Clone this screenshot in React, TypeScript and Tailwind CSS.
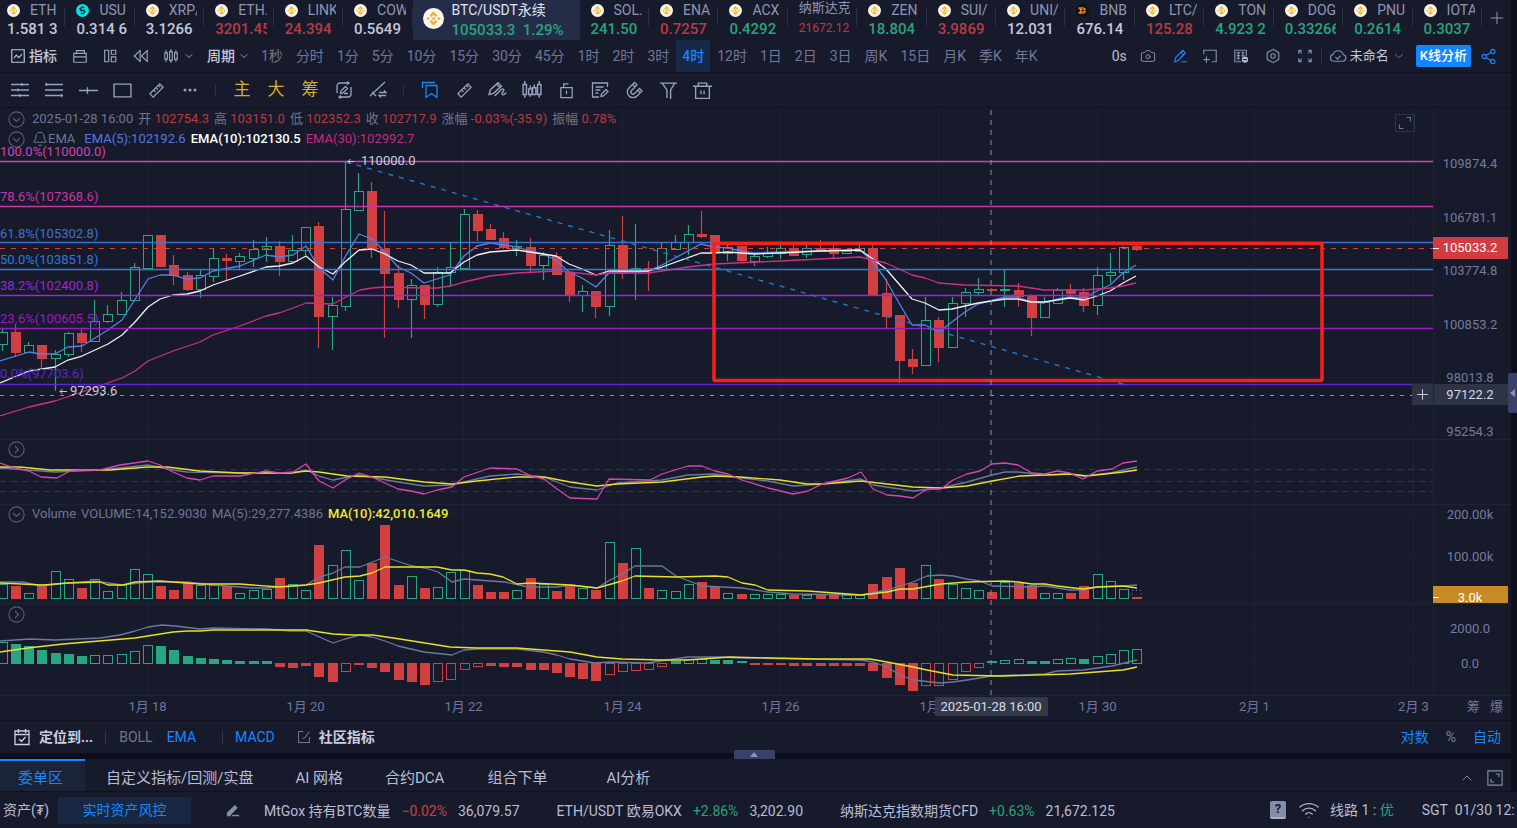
import React from 'react';
import { Camera, Share2, Wifi, Plus, ChevronDown, ChevronUp, Bell } from 'lucide-react';

const UP = '#27a67f';
const DOWN = '#d23f40';
const GREY = '#6f779b';
const YELLOW = '#e6e12a';
const FONT = 'Roboto, "Noto Sans CJK SC", sans-serif';

/* ---------- tickers ---------- */

interface Ticker {
  name: string;
  price: string;
  tone: 'flat' | 'up' | 'down';
  coin?: 'gold' | 'cyan' | 'orange';
}

const tickersLeft: Ticker[] = [
  { name: 'ETH', price: '1.581 3', tone: 'flat', coin: 'gold' },
  { name: 'USU', price: '0.314 6', tone: 'flat', coin: 'cyan' },
  { name: 'XRP/', price: '3.1266', tone: 'flat', coin: 'gold' },
  { name: 'ETH.', price: '3201.45', tone: 'down', coin: 'gold' },
  { name: 'LINK', price: '24.394', tone: 'down', coin: 'gold' },
  { name: 'COW', price: '0.5649', tone: 'flat', coin: 'gold' },
];

const tickersRight: Ticker[] = [
  { name: 'SOL.', price: '241.50', tone: 'up', coin: 'gold' },
  { name: 'ENA', price: '0.7257', tone: 'down', coin: 'gold' },
  { name: 'ACX', price: '0.4292', tone: 'up', coin: 'gold' },
  { name: '纳斯达克', price: '21672.12', tone: 'down' },
  { name: 'ZEN', price: '18.804', tone: 'up', coin: 'gold' },
  { name: 'SUI/', price: '3.9869', tone: 'down', coin: 'gold' },
  { name: 'UNI/', price: '12.031', tone: 'flat', coin: 'gold' },
  { name: 'BNB', price: '676.14', tone: 'flat', coin: 'orange' },
  { name: 'LTC/', price: '125.28', tone: 'down', coin: 'gold' },
  { name: 'TON', price: '4.923 2', tone: 'up', coin: 'gold' },
  { name: 'DOG', price: '0.33266', tone: 'up', coin: 'gold' },
  { name: 'PNU', price: '0.2614', tone: 'up', coin: 'gold' },
  { name: 'IOTA', price: '0.3037', tone: 'up', coin: 'gold' },
];

const toneClass = {
  flat: 'text-[#c3c8dc]',
  up: 'text-[#2aa37c]',
  down: 'text-[#b93a42]',
};

const Coin: React.FC<{ kind: 'gold' | 'cyan' | 'orange'; className: string }> = ({ kind, className }) => (
  <svg viewBox="0 0 20 20" className={className}>
    {kind === 'gold' && (
      <>
        <circle cx="10" cy="10" r="10" fill="#fbf7ee" />
        <path d="M10 3.6 13.4 7l-1.3 1.3L10 6.2 7.9 8.3 6.6 7zM4.9 8.7 6.2 10l-1.3 1.3L3.6 10zM15.1 8.7l1.3 1.3-1.3 1.3-1.3-1.3zM10 8.5l1.5 1.5-1.5 1.5L8.5 10zM7.9 11.7l2.1 2.1 2.1-2.1 1.3 1.3-3.4 3.4L6.6 13z" fill="#efb22f" stroke="#efb22f" strokeWidth=".7" />
      </>
    )}
    {kind === 'cyan' && (
      <>
        <circle cx="10" cy="10" r="10" fill="#12dcdc" />
        <path d="M12.8 4.8H9L6 7.6l2.2 2.2h3.4l2 2-2.8 3H7.2" fill="none" stroke="#0c2a3c" strokeWidth="2.2" />
        <path d="m11.2 7.4 1.8 1.8M7 10.8l1.8 1.8" stroke="#0c2a3c" strokeWidth="1.4" />
      </>
    )}
    {kind === 'orange' && (
      <>
        <circle cx="10" cy="10" r="10" fill="#15110d" />
        <path d="M4 5h7l4 2v2l-1.5 1L15 11v2l-4 2H4v-3h2V8H4z" fill="#f0861a" />
        <path d="M8 10h5M10.5 6v8" stroke="#15110d" strokeWidth="1.2" />
      </>
    )}
  </svg>
);

const TickerItem: React.FC<{ item: Ticker }> = ({ item }) => (
  <button className="flex-1 min-w-0 h-10 flex items-start text-left">
    <span className="flex-1 min-w-0 pl-[11px] overflow-hidden whitespace-nowrap">
      {item.coin ? (
        <>
          <span className="flex items-center h-5 text-sm leading-5 text-[#8f96b3]">
            <Coin kind={item.coin} className="w-[13px] h-[13px] shrink-0 mr-2.5" />
            {item.name}
          </span>
          <span className={`block text-[15px] leading-[19px] font-medium whitespace-pre ${toneClass[item.tone]}`}>{item.price}</span>
        </>
      ) : (
        <>
          <span className="block text-[13px] leading-4 text-[#8f96b3]">{item.name}</span>
          <span className={`block pt-1 text-xs leading-4 ${toneClass[item.tone]}`}>{item.price}</span>
        </>
      )}
    </span>
    <span className="w-px h-[18px] mt-2 ml-1.5 shrink-0 bg-[#2b3047]"></span>
  </button>
);

const TickerBar: React.FC = () => (
  <nav className="flex h-10 overflow-hidden">
    <div className="flex flex-1 min-w-0 -ml-1">
      {tickersLeft.map((item, index) => <TickerItem key={index} item={item} />)}
      <button className="w-[167px] shrink-0 h-10 pl-2.5 flex items-center bg-[#252c47] text-left whitespace-nowrap">
        <Coin kind="gold" className="w-[21px] h-[21px] mr-2 mb-1 shrink-0" />
        <span>
          <span className="block text-sm leading-5 text-[#dfe3f2]">BTC/USDT永续</span>
          <span className="block text-[15px] leading-5 font-medium text-[#2aa37c]">105033.3&nbsp; 1.29%</span>
        </span>
      </button>
      {tickersRight.map((item, index) => <TickerItem key={index} item={item} />)}
    </div>
    <button aria-label="添加" className="w-[29px] shrink-0 flex items-center justify-center text-[#8f96b3]">
      <Plus className="w-5 h-5 mb-1" strokeWidth={1.2} />
    </button>
  </nav>
);

/* ---------- toolbars ---------- */

interface GlyphProps {
  d: string;
  className?: string;
  children?: React.ReactNode;
}

const Glyph: React.FC<GlyphProps> = ({ d, className = 'w-4 h-4', children }) => (
  <svg viewBox="0 0 18 18" className={`${className} shrink-0`} fill="none" stroke="currentColor" strokeWidth="1.3">
    <path d={d} />
    {children}
  </svg>
);

const intervals = [
  '1秒', '分时', '1分', '5分', '10分', '15分', '30分', '45分', '1时', '2时', '3时', '4时',
  '12时', '1日', '2日', '3日', '周K', '15日', '月K', '季K', '年K',
];

const PeriodBar: React.FC = () => (
  <div className="flex items-center h-[33px] border-b border-[#0f111f] text-sm text-[#c3c8dc] whitespace-nowrap overflow-hidden">
    <button className="flex items-center gap-[3px] ml-2.5 font-medium">
      <Glyph d="M2 2h14v14H2zM4.5 11.5 7 8l3 3 3.500-4" />
      指标
    </button>
    <button aria-label="模板" className="ml-[15px] text-[#9aa1bd]"><Glyph d="M2 6h14v10H2zM5 6V3h9v3M2 10h14" /></button>
    <button aria-label="布局" className="ml-3.5 text-[#9aa1bd]"><Glyph d="M3 2.500h4.500v13H3zM10.500 2.500h5v4.500h-5zM10.500 10h5v5.500h-5z" /></button>
    <button aria-label="回放" className="ml-[15px] text-[#9aa1bd]"><Glyph d="M8 3v12L1.500 9zM16 3v12L9.500 9z" /></button>
    <button aria-label="图表类型" className="ml-3.5 flex items-center gap-1 text-[#9aa1bd]">
      <Glyph d="M3.500 2.500v3M3.500 12.500v3M2 5.500h3v7H2zM9 1v3M9 14v3M7.500 4h3v10h-3zM14.500 2.500v3M14.500 12.500v3M13 5.500h3v7h-3z" />
      <ChevronDown className="w-3 h-3" strokeWidth={1.8} />
    </button>
    <button className="ml-3 mr-[5px] flex items-center gap-[3px] font-medium">
      周期
      <ChevronDown className="w-3 h-3 text-[#9aa1bd]" strokeWidth={1.8} />
    </button>
    <div className="flex gap-px h-full">
      {intervals.map((label) => (
        <button
          key={label}
          className={label === '4时' ? 'px-1.5 bg-[#162a48] text-[#1787ff] font-medium' : 'px-1.5 text-[#6f779b]'}
        >
          {label}
        </button>
      ))}
    </div>
    <div className="ml-auto mr-3.5 flex items-center text-[#868dab]">
      <span className="text-[#b9bfd6] mr-[13px]">0s</span>
      <button aria-label="截图" className="mr-4"><Camera className="w-4 h-4" strokeWidth={1.5} /></button>
      <button aria-label="画线" className="mr-3.5 text-[#1787ff]"><Glyph d="M3 15.500 4 11 12 2.500l3 3L7 14zM10.500 15.500H17M10 5l3 3" /></button>
      <button aria-label="添加窗口" className="mr-[15px]"><Glyph d="M2 7V2.500h14v13h-5M5 9.500v7M1.500 13h7" /></button>
      <button aria-label="公告" className="mr-4">
        <Glyph d="M9.500 15.500H2v-13h13V9M4 5.500h4M4 8.500h4M4 11.500h4M6 4v10M9.500 5.500H13M9.500 8.500h3.500M11 4v6">
          <circle cx="13.500" cy="13" r="3.500" fill="#b9bfd6" stroke="none" />
          <path d="M11.500 13h4" stroke="#171a2b" />
        </Glyph>
      </button>
      <button aria-label="设置" className="mr-4"><Glyph d="m9 1.500 6.500 3.750v7.500L9 16.500l-6.500-3.750v-7.500z"><circle cx="9" cy="9" r="2.500" /></Glyph></button>
      <button aria-label="全屏" className="mr-2"><Glyph d="M2 6.500V2.500h4M12 2.500h4v4M16 11.500v4h-4M6 15.500H2v-4M2.500 3l3 3M15.500 3l-3 3M15.500 15l-3-3M2.500 15l3-3" /></button>
      <span className="w-px h-4 bg-[#2b3047] mr-[7px]"></span>
      <button className="flex items-center text-[13px] text-[#c3c8dc] mr-2.5">
        <svg viewBox="0 0 20 16" className="w-[18px] h-3.5 mr-[3px] text-[#868dab]" fill="none" stroke="currentColor" strokeWidth="1.3">
          <path d="M5 14a4 4 0 0 1-.5-7.900A6 6 0 0 1 16 6.500 3.800 3.800 0 0 1 15.500 14zM7 9l2.500 2.500L13 7.500" />
        </svg>
        未命名
        <ChevronDown className="w-3.5 h-3.5 ml-[3px] text-[#868dab]" strokeWidth={1.4} />
      </button>
      <button className="h-[22px] px-1 rounded-xs bg-[#1285ff] text-white text-[13px] font-medium mr-[9px]">K线分析</button>
      <button aria-label="分享" className="text-[#1787ff]"><Share2 className="w-[17px] h-[17px]" strokeWidth={1.6} /></button>
    </div>
  </div>
);

const ToolButton: React.FC<{ label: string; children: React.ReactNode; className?: string }> = ({ label, children, className = '' }) => (
  <button aria-label={label} className={`w-[34px] h-full flex items-center justify-center shrink-0 ${className}`}>
    {children}
  </button>
);

const RULER = 'm2 12.500 10.500-10.500 3.500 3.500L5.500 16zM6 8.500 8 10.500M8.500 6l2 2M11 3.500l2 2';

const DrawBar: React.FC = () => (
  <div className="flex items-center h-[35px] pl-[3px] border-b border-[#0f111f] text-[#9aa1bd]">
    <ToolButton label="平行线"><Glyph className="w-[18px] h-[18px]" d="M0 3.500h18M0 9h18M0 14.500h18M11 2v3M7 7.500v3M9 13v3" /></ToolButton>
    <ToolButton label="斐波那契"><Glyph className="w-[18px] h-[18px]" d="M0 3.500h18M0 9h18M0 14.500h18M1.500 2v3M16.500 13v3" /></ToolButton>
    <ToolButton label="水平线"><Glyph className="w-[19px] h-[19px]" d="M0 9h18M8 6v6" /></ToolButton>
    <ToolButton label="矩形"><Glyph className="w-[19px] h-[19px]" d="M1 3h16v12H1z" /></ToolButton>
    <ToolButton label="测量"><Glyph className="w-[17px] h-[17px]" d={RULER} /></ToolButton>
    <ToolButton label="更多">
      <svg viewBox="0 0 14 4" className="w-3.5 h-1" fill="currentColor">
        <circle cx="2" cy="2" r="1.500" /><circle cx="7" cy="2" r="1.500" /><circle cx="12" cy="2" r="1.500" />
      </svg>
    </ToolButton>
    <span className="w-px h-3 ml-2 mr-[9px] bg-[#2b3047]"></span>
    <button className="w-[34px] text-[17px] text-[#d9ac30]">主</button>
    <button className="w-[34px] text-[17px] text-[#d9ac30]">大</button>
    <button className="w-[34px] text-[17px] text-[#d9ac30]">筹</button>
    <ToolButton label="连续绘制"><Glyph className="w-[18px] h-[18px]" d="M14 2H5a3 3 0 0 0-3 3v7M4 16h9a3 3 0 0 0 3-3V6M12 .5 14 2l-2 1.500M6 14.500 4 16l2 1.500M5.500 12.500l.5-2.500 4.500-4.500 2 2L8 12zM9 12.500h4" /></ToolButton>
    <ToolButton label="趋势"><Glyph className="w-[18px] h-[18px]" d="M1 15 16 1M3 11l4 4M10 11.500h7l-2-2M17 14.500h-7l2 2" /></ToolButton>
    <span className="w-px h-3 ml-2 mr-[9px] bg-[#2b3047]"></span>
    <ToolButton label="收藏" className="text-[#1787ff]"><Glyph className="w-[18px] h-[18px]" d="M1.500 7V1.500H14M5 4.500h11v12l-5.500-4-5.500 4z" /></ToolButton>
    <ToolButton label="尺子"><Glyph className="w-[17px] h-[17px]" d={RULER} /></ToolButton>
    <ToolButton label="画笔"><Glyph className="w-5 h-5" d="m1 13 1-4 7-6.500 3 3L5 12zM8 4l3 3M6 14.500l6-6c2-1.500 3 .500 1.500 2s-1 3.500 1 2.500l2-1.500" /></ToolButton>
    <ToolButton label="形态"><Glyph className="w-5 h-5" d="M2.500 1v3M2.500 13v3M1 4h3v9H1zM7.500 5v3M6 8h3v5H6zM7.500 13v2M11 4v3M9.500 7h3v6h-3zM15.500 1v3M15.500 13v3M14 4h3v9h-3z" /></ToolButton>
    <ToolButton label="锁定"><Glyph className="w-[17px] h-[17px]" d="M3 6h12v10.500H3zM6 6V2h5M9 9v4" /></ToolButton>
    <ToolButton label="笔记"><Glyph className="w-[18px] h-[18px]" d="M16.500 6V2h-15v14H8M4.500 6h8M4.500 9h5M4.500 12h3M10 15.500l.5-2.500L15 8.500l2 2-4.500 4.500z" /></ToolButton>
    <ToolButton label="磁吸"><Glyph className="w-[18px] h-[18px]" d="M9.500 1.500 4 7a5.600 5.600 0 0 0 8 8l5-5-2.500-2.500-5 5a2 2 0 0 1-3-3L12 4zM7.500 3.500 10 6M13 9.500l2 2" /></ToolButton>
    <ToolButton label="筛选"><Glyph className="w-[19px] h-[19px]" d="M1 2h16M3 2l4.500 6.500V16M15 2l-4 6.500V17" /></ToolButton>
    <ToolButton label="删除"><Glyph className="w-[19px] h-[19px]" d="M0 5h18M5 5V2h8v3M2.500 5v11.500h13V5M7.500 9v3.500M10.500 9v3.500" /></ToolButton>
  </div>
);

/* ---------- chart ---------- */

const TOP = 108;
const CHART_HEIGHT = 612;
const STEP = 13.19;
const barX = (i: number) => Math.floor(2.4 + STEP * i) + 0.5;

// direction (1 up, 0 down), high, body top, body bottom, low
const candles = [
  [1, 329, 332, 344, 351], [0, 324, 332, 352, 357], [1, 342, 345, 352, 353], [0, 345, 345, 358, 368],
  [1, 350, 354, 358, 391], [1, 332, 333, 354, 357], [0, 329, 333, 342, 352], [1, 300, 321, 341, 341],
  [1, 305, 314, 321, 323], [1, 292, 300, 314, 314], [1, 263, 267, 300, 300], [1, 235, 235, 268, 268],
  [0, 235, 235, 266, 266], [0, 255, 265, 275, 285], [0, 272, 275, 289, 291], [1, 269, 275, 289, 298],
  [1, 248, 258, 276, 282], [0, 254, 258, 260, 281], [1, 253, 256, 261, 270], [1, 240, 249, 258, 267],
  [1, 237, 246, 249, 262], [0, 241, 246, 261, 276], [1, 235, 250, 261, 261], [1, 227, 227, 250, 255],
  [0, 222, 226, 316, 348], [1, 297, 305, 316, 350], [1, 162, 209, 306, 311], [1, 173, 191, 210, 210],
  [0, 182, 191, 249, 258], [0, 211, 249, 273, 338], [0, 265, 273, 299, 308], [1, 279, 285, 299, 338],
  [0, 285, 285, 304, 319], [1, 267, 272, 304, 307], [1, 243, 267, 272, 287], [1, 209, 214, 268, 268],
  [0, 210, 214, 230, 241], [0, 224, 229, 239, 240], [0, 232, 238, 247, 249], [1, 240, 246, 248, 256],
  [0, 238, 247, 265, 273], [1, 252, 255, 265, 280], [0, 252, 256, 274, 274], [0, 272, 272, 295, 302],
  [1, 285, 291, 295, 312], [0, 291, 291, 306, 318], [1, 230, 245, 306, 316], [0, 216, 245, 273, 279],
  [1, 224, 268, 272, 300], [0, 261, 268, 269, 291], [1, 243, 248, 269, 270], [1, 235, 242, 249, 250],
  [1, 225, 234, 242, 255], [0, 211, 234, 236, 238], [0, 235, 235, 251, 251], [1, 245, 247, 253, 261],
  [0, 246, 246, 260, 262], [1, 254, 256, 261, 266], [1, 247, 252, 256, 258], [1, 245, 248, 253, 259],
  [0, 245, 248, 255, 255], [1, 245, 248, 254, 258], [0, 240, 248, 251, 251], [0, 244, 248, 253, 259],
  [1, 249, 251, 253, 254], [1, 244, 248, 251, 251], [0, 245, 248, 294, 294], [0, 279, 293, 316, 328],
  [0, 315, 315, 360, 383], [0, 349, 359, 366, 374], [1, 297, 320, 365, 365], [0, 317, 320, 347, 362],
  [1, 297, 303, 347, 348], [1, 288, 292, 303, 317], [1, 278, 289, 292, 295], [0, 288, 289, 290, 290],
  [1, 270, 289, 290, 307], [0, 283, 290, 296, 307], [0, 294, 296, 317, 336], [1, 297, 302, 317, 317],
  [1, 288, 290, 303, 304], [0, 284, 289, 293, 295], [0, 288, 292, 305, 312], [1, 267, 275, 305, 315],
  [1, 253, 272, 275, 283], [1, 246, 247, 272, 280], [0, 243, 246, 249, 251],
];

const volumes = [
  15, 13, 6, 14, 28, 20, 11, 20, 8, 14, 30, 25, 13, 9, 16, 14, 14, 13, 6, 9, 10, 21, 15, 9, 54, 34, 49, 19, 36, 74,
  14, 23, 11, 12, 27, 29, 14, 7, 7, 9, 21, 15, 8, 14, 11, 9, 57, 36, 51, 11, 9, 8, 15, 17, 12, 6, 5, 5, 5, 5,
  4, 4, 4, 4, 4, 4, 15, 22, 31, 16, 34, 20, 15, 11, 9, 7, 17, 16, 14, 6, 6, 6, 13, 25, 18, 10, 2,
];

// histogram height, 1 when the bar is hollow
const macd = [
  [21, 1], [19, 0], [17, 0], [13, 0], [10, 0], [9, 0], [7, 0], [8, 1], [8, 1], [9, 1], [12, 1], [18, 1],
  [17, 0], [13, 0], [7, 0], [5, 0], [4, 0], [3, 0], [2, 0], [2, 0], [2, 0], [-3, 0], [-4, 0], [-2, 0],
  [-13, 0], [-18, 0], [-8, 1], [-1, 0], [-4, 0], [-8, 0], [-16, 0], [-18, 0], [-21, 0], [-18, 1], [-16, 1], [-6, 1],
  [-3, 1], [-2, 0], [-3, 0], [-3, 0], [-6, 0], [-6, 0], [-9, 0], [-13, 0], [-15, 0], [-17, 0], [-11, 1], [-8, 1],
  [-7, 1], [-6, 1], [-3, 1], [2, 0], [4, 1], [4, 1], [3, 0], [3, 0], [1, 0], [-1, 0], [-1, 0], [-1, 0],
  [-2, 0], [-2, 0], [-2, 0], [-2, 0], [-2, 0], [-2, 0], [-7, 0], [-14, 0], [-21, 0], [-27, 0], [-22, 1], [-22, 1],
  [-16, 1], [-8, 1], [-4, 1], [1, 0], [3, 1], [4, 1], [2, 0], [2, 0], [4, 1], [5, 1], [4, 0], [7, 1],
  [9, 1], [13, 1], [14, 1],
];

const lines = [
  {
    color: '#5b7fe0',
    points: '0,361 29,352 40,354 55,354 68,347 82,346 108,330 122,320 148,279 160,275 173,275 187,279 200,278 213,271 240,266 266,255 279,257 293,255 306,246 319,268 333,280 345,257 359,234 372,239 385,252 398,267 411,273 424,283 450,275 464,256 477,246 490,243 517,247 530,251 543,254 556,260 569,272 582,278 596,287 609,273 622,272 635,272 648,271 662,265 675,258 701,244 714,247 728,248 741,251 754,253 780,252 820,251 860,250 873,262 886,280 899,303 912,325 925,325 939,332 952,322 965,312 978,304 1005,297 1018,297 1031,302 1044,303 1057,299 1070,297 1084,298 1097,291 1110,285 1123,273 1136,265',
  },
  {
    color: '#eef0f6',
    points: '0,383 29,371 55,367 68,360 82,356 108,344 122,335 135,322 148,307 160,299 173,295 187,294 200,291 213,285 240,276 266,267 279,266 293,263 306,256 319,267 333,274 345,262 359,250 372,249 385,254 398,261 411,265 424,273 450,273 464,262 477,255 490,252 517,250 530,252 543,254 556,256 569,264 582,269 596,275 609,271 648,271 662,267 701,253 714,253 728,252 754,254 780,253 820,251 860,250 873,259 886,269 899,284 912,299 925,303 939,310 952,309 978,303 1005,299 1018,299 1031,302 1044,302 1057,300 1070,298 1084,300 1097,296 1110,291 1123,283 1136,276',
  },
  {
    color: '#cf2e86',
    points: '0,416 29,407 55,401 82,392 122,378 135,371 148,361 173,351 200,342 213,335 240,326 266,316 279,313 293,308 306,303 333,304 346,297 360,290 372,288 385,287 424,288 437,288 450,286 464,282 490,276 517,273 556,271 569,272 596,275 609,273 648,273 675,269 688,267 714,264 780,261 820,259 860,257 886,263 899,269 912,275 925,278 939,283 965,285 1018,286 1031,288 1044,290 1084,290 1110,288 1123,286 1136,283',
  },
  {
    color: GREY,
    points: '0,468 55,472 100,470 148,465 173,470 187,472 240,473 293,473 306,470 319,476 333,480 359,475 398,482 424,486 452,485 464,482 490,476 517,474 544,477 570,487 597,490 617,483 662,480 688,475 715,474 742,478 768,481 793,486 822,484 861,479 873,485 913,491 941,488 967,482 992,475 1005,472 1018,472 1045,475 1070,474 1083,476 1110,473 1137,467',
  },
  {
    color: YELLOW,
    points: '0,467 20,467 50,470 110,470 148,467 167,467 200,471 240,473 290,473 306,471 319,472 333,474 347,476 385,477 424,482 452,484 477,481 517,477 544,477 570,482 597,486 617,484 662,482 702,477 715,476 740,477 780,480 807,484 822,484 861,481 887,484 913,487 941,488 967,486 992,481 1020,476 1045,475 1070,474 1087,476 1123,472 1137,470',
  },
  {
    color: '#d545b3',
    points: '0,463 15,468 29,471 41,477 57,478 70,471 82,470 100,470 120,465 148,461 160,465 173,472 187,478 200,480 213,476 240,476 266,471 279,473 293,472 306,464 319,481 333,488 345,480 359,473 372,477 398,489 411,491 424,494 437,490 452,487 464,477 490,468 517,469 531,476 544,479 557,489 570,498 597,499 609,479 650,480 662,474 688,466 702,466 715,471 728,474 742,480 768,488 793,494 808,491 822,484 848,478 861,472 873,489 887,495 900,496 913,498 927,489 941,489 953,480 967,474 980,471 992,464 1005,463 1018,465 1032,473 1045,474 1057,471 1070,473 1083,479 1097,471 1112,469 1123,463 1137,461',
  },
  {
    color: GREY,
    points: '0,582 23,582 40,586 68,583 95,581 122,585 148,582 187,582 213,585 253,588 266,588 279,587 306,585 319,577 333,573 345,567 360,567 385,557 412,566 425,568 438,572 452,582 464,579 477,580 505,582 528,587 557,587 570,585 597,588 610,580 622,574 635,566 662,566 676,576 702,586 742,588 768,592 793,594 861,595 887,590 913,582 927,576 941,575 953,576 967,579 980,581 992,586 1030,587 1045,586 1070,590 1083,590 1097,587 1123,586 1137,585',
  },
  {
    color: YELLOW,
    points: '0,583 43,585 68,583 100,582 108,585 123,585 135,582 160,581 200,584 240,584 279,587 306,585 319,583 345,577 360,576 372,573 385,567 437,567 452,570 464,570 477,573 490,574 503,577 517,584 531,583 570,585 597,588 622,581 635,576 676,577 715,576 728,577 742,583 755,585 768,590 808,591 848,594 861,595 887,592 900,589 913,589 941,584 967,582 1005,581 1018,582 1032,584 1045,584 1057,586 1083,589 1097,587 1123,586 1137,588',
  },
  {
    color: GREY,
    points: '0,641 30,639 55,640 100,638 120,635 135,631 148,627 162,625 175,626 200,629 213,628 267,629 290,631 306,631 333,643 345,639 360,635 372,637 385,641 398,646 424,652 452,655 464,650 477,649 517,649 543,652 557,655 570,659 595,663 610,662 647,663 688,657 720,657 740,658 861,660 873,662 887,667 900,675 913,680 940,683 953,682 967,680 992,676 1045,674 1057,671 1083,670 1112,666 1137,660',
  },
  {
    color: YELLOW,
    points: '0,652 28,648 63,644 135,638 173,632 187,631 200,631 213,630 306,630 333,634 353,635 373,635 400,639 450,647 477,648 517,648 570,652 597,657 622,659 662,660 687,660 730,657 817,659 870,659 887,662 913,667 927,670 953,675 1000,676 1070,674 1123,670 1137,667',
  },
];

const fibs = [
  { y: 161.5, label: '100.0%(110000.0)', labelY: 156, color: '#d044b4' },
  { y: 206.5, label: '78.6%(107368.6)', labelY: 201, color: '#c836a8' },
  { y: 242.5, label: '61.8%(105302.8)', labelY: 238, color: '#3d73d2' },
  { y: 269.5, label: '50.0%(103851.8)', labelY: 264, color: '#2f78dc' },
  { y: 295.5, label: '38.2%(102400.8)', labelY: 290, color: '#9e26dc' },
  { y: 328.5, label: '23.6%(100605.5)', labelY: 323, color: '#9a1bc6' },
  { y: 384.5, label: '0.0%(97703.6)', labelY: 378, color: '#5f24dc' },
];

const dates = [
  { x: 147.5, label: '1月 18' },
  { x: 305.5, label: '1月 20' },
  { x: 463.5, label: '1月 22' },
  { x: 622.5, label: '1月 24' },
  { x: 780.5, label: '1月 26' },
  { x: 938.5, label: '1月 28' },
  { x: 1097.5, label: '1月 30' },
  { x: 1254.5, label: '2月 1' },
  { x: 1413.5, label: '2月 3' },
];

const axisTicks = [
  { y: 163, label: '109874.4' },
  { y: 217, label: '106781.1' },
  { y: 270, label: '103774.8' },
  { y: 324, label: '100853.2' },
  { y: 377, label: '98013.8' },
  { y: 431, label: '95254.3' },
  { y: 514, label: '200.00k' },
  { y: 556, label: '100.00k' },
  { y: 628, label: '2000.0' },
  { y: 663, label: '0.0' },
];

const paneBorders = [439.5, 504.5, 603.5, 695.5];

interface BarProps {
  x: number;
  y: number;
  height: number;
  color: string;
  hollow: boolean;
}

const Bar: React.FC<BarProps> = ({ x, y, height, color, hollow }) =>
  hollow && height > 2 ? (
    <rect x={x - 4} y={y + 0.5} width={9} height={height - 1} fill="none" stroke={color} />
  ) : (
    <rect x={x - 4.5} y={y} width={10} height={Math.max(height, 2)} fill={color} />
  );

const Candle: React.FC<{ data: number[]; index: number }> = ({ data, index }) => {
  const [up, high, top, bottom, low] = data;
  const x = barX(index);
  const color = up ? UP : DOWN;
  return (
    <g>
      <path d={`M${x} ${high}V${top}M${x} ${bottom}V${low}`} stroke={color} strokeWidth="1.2" />
      <Bar x={x} y={top} height={bottom - top + 1} color={color} hollow={up === 1} />
    </g>
  );
};

const Plot: React.FC = () => (
  <svg className="block w-full" height={CHART_HEIGHT} fontFamily={FONT} fontSize="13">
    <g transform={`translate(0 ${-TOP})`}>
      {dates.map((d) => <path key={d.x} d={`M${d.x} 108V696`} stroke="#1d2135" />)}
      {axisTicks.map((t) => <line key={t.y} x1="0" x2="100%" y1={t.y + 0.5} y2={t.y + 0.5} stroke="#1b1f32" />)}
      {paneBorders.map((y) => <line key={y} x1="0" x2="100%" y1={y} y2={y} stroke="#1f2338" />)}
      {[469.5, 481.5, 491.5].map((y) => (
        <line key={y} x1="0" x2="100%" y1={y} y2={y} stroke="#31364d" strokeDasharray="6 5" />
      ))}

      {candles.map((c, i) => <Candle key={i} data={c} index={i} />)}
      {volumes.map((v, i) => (
        <Bar key={i} x={barX(i)} y={599 - v} height={v} color={candles[i][0] ? UP : DOWN} hollow={candles[i][0] === 1} />
      ))}
      <rect x={1132} y={590.5} width={9} height={7} fill="none" stroke={GREY} strokeDasharray="1 3" />
      {macd.map(([value, hollow], i) => (
        <Bar
          key={i}
          x={barX(i)}
          y={value > 0 ? 663 - Math.max(value, 2) : 663}
          height={Math.abs(value) + 1}
          color={value > 0 ? UP : DOWN}
          hollow={hollow === 1}
        />
      ))}
      {lines.map((l, i) => (
        <polyline key={i} points={l.points} fill="none" stroke={l.color} strokeWidth="1.3" strokeLinejoin="round" />
      ))}

      {fibs.map((f) => (
        <g key={f.y}>
          <line x1="0" x2="100%" y1={f.y} y2={f.y} stroke={f.color} strokeWidth="1.4" />
          <text x="0" y={f.labelY} fill={f.color}>{f.label}</text>
        </g>
      ))}
      <path d="M346 162 1123 384" stroke="#2079c8" strokeWidth="1.4" strokeDasharray="5 6" />
      <line x1="0" x2="100%" y1="248.5" y2="248.5" stroke={DOWN} strokeDasharray="5 6" />
      <rect x="714" y="243.5" width="608" height="137" rx="1" fill="none" stroke="#f9201a" strokeWidth="3.5" />

      <g fill="#c8cddd" stroke="none">
        <text x="361" y="165">110000.0</text>
        <text x="70" y="395">97293.6</text>
      </g>
      <path d="M354 161.500h-6l2.500-2.500M348 161.500l2.500 2.500M67 391.500h-7l2.500-2.500M60 391.500l2.500 2.500" fill="none" stroke="#c8cddd" />

      <line x1="0" x2="100%" y1="395.5" y2="395.5" stroke="#8b90a6" strokeDasharray="4 6" />
      <line x1="991" x2="991" y1="110" y2="696" stroke="#8b90a6" strokeDasharray="5 5" />

      {dates.map((d) => (
        <text key={d.label} x={d.x} y="711" textAnchor="middle" fill="#6f779b">{d.label}</text>
      ))}
      <rect x="935" y="697" width="113" height="19" fill="#34394a" />
      <text x="991" y="711" textAnchor="middle" fill="#d8dcea">2025-01-28 16:00</text>
    </g>
  </svg>
);

const PriceAxis: React.FC = () => (
  <svg className="block w-full" height={CHART_HEIGHT} fontFamily={FONT} fontSize="13">
    <g transform={`translate(0 ${-TOP})`}>
      <path d="M0.500 108V696" stroke="#1f2338" />
      {paneBorders.map((y) => <line key={y} x1="0" x2="100%" y1={y} y2={y} stroke="#1f2338" />)}
      {axisTicks.map((t) => (
        <text key={t.y} x="37" y={t.y + 5} textAnchor="middle" fill="#747b9c">{t.label}</text>
      ))}
      <rect x="0" y="237" width="75" height="22" fill="#d03c40" />
      <path d="M0 248.500h6" stroke="#fff" />
      <text x="37" y="252" textAnchor="middle" fill="#fff">105033.2</text>
      <rect x="1" y="384" width="74" height="21" fill="#2f3444" />
      <text x="37" y="399" textAnchor="middle" fill="#d3d7e6">97122.2</text>
      <rect x="0" y="586" width="75" height="17" fill="#c78b26" />
      <path d="M0 597.500h6" stroke="#fff" />
      <text x="37" y="602" textAnchor="middle" fill="#fff">3.0k</text>
      <g fill="#6f779b">
        <text x="34" y="711">筹</text>
        <text x="57" y="711">爆</text>
      </g>
    </g>
  </svg>
);

const Toggle: React.FC<{ open?: boolean }> = ({ open = false }) => (
  <button aria-label={open ? '收起' : '展开'} className="w-[17px] h-[17px] mr-0.5 shrink-0 text-[#565c78]">
    <svg viewBox="0 0 17 17" className="w-full h-full" fill="none" stroke="currentColor" strokeWidth="1.1">
      <circle cx="8.5" cy="8.5" r="7.6" />
      <path d={open ? 'm5 7 3.500 3.500L12 7' : 'm7 5 3.500 3.500L7 12'} />
    </svg>
  </button>
);

const ohlc = [
  { label: '开', value: '102754.3' },
  { label: '高', value: '103151.0' },
  { label: '低', value: '102352.3' },
  { label: '收', value: '102717.9' },
  { label: '涨幅', value: '-0.03%(-35.9)' },
  { label: '振幅', value: '0.78%' },
];

const Chart: React.FC = () => (
  <section className="flex">
    <div className="relative flex-1 min-w-0 text-[13px] leading-5 whitespace-nowrap">
      <Plot />
      <div className="absolute top-px left-2 flex items-center gap-[5px] text-[#6f7590]">
        <Toggle open />
        <span>2025-01-28 16:00</span>
        {ohlc.map((item) => (
          <span key={item.label}>
            {item.label} <span className="text-[#b93a42]">{item.value}</span>
          </span>
        ))}
      </div>
      <div className="absolute top-[21px] left-2 flex items-center gap-[5px] text-[#6f7590]">
        <Toggle open />
        <span className="flex items-center mr-1">
          <Bell className="w-4 h-4" strokeWidth={1.6} />EMA
        </span>
        <span className="text-[#5577e0]">EMA(5):102192.6</span>
        <span className="text-white font-medium">EMA(10):102130.5</span>
        <span className="text-[#c22c7e]">EMA(30):102992.7</span>
      </div>
      <div className="absolute top-[333px] left-2 flex"><Toggle /></div>
      <div className="absolute top-[396px] left-2 flex items-center gap-[5px] text-[#6f7590]">
        <Toggle open />
        <span>Volume</span>
        <span>VOLUME:14,152.9030</span>
        <span>MA(5):29,277.4386</span>
        <span className="text-[#f1ec2f] font-medium">MA(10):42,010.1649</span>
      </div>
      <div className="absolute top-[498px] left-2 flex"><Toggle /></div>
      <button aria-label="放大" className="absolute top-1.5 right-[18px] w-5 h-[18px] border border-[#2c3150] text-[#6f7590] flex items-center justify-center">
        <Glyph className="w-3.5 h-3.5" d="M11 2h5v5M2 11v5h5" />
      </button>
      <button aria-label="添加提醒" className="absolute top-[276px] right-0 w-[21px] h-[21px] bg-[#2f3444] text-[#d3d7e6] flex items-center justify-center">
        <Plus className="w-[17px] h-[17px]" strokeWidth={1.3} />
      </button>
    </div>
    <div className="w-[78px] shrink-0">
      <PriceAxis />
    </div>
  </section>
);

/* ---------- footer rows ---------- */

const IndicatorBar: React.FC = () => (
  <div className="relative flex items-center h-[33px] border-t border-[#0f111f] text-sm text-[#c9cee0] whitespace-nowrap">
    <Glyph className="w-[18px] h-[18px] ml-[13px]" d="M2 3h14v13.500H2zM2 6.500h14M5.500 1v4M12.500 1v4M6 11l2.500 2.500L12.500 9" />
    <button className="ml-2 font-bold">定位到...</button>
    <span className="w-px h-3.5 ml-3 mr-[13px] bg-[#2f344d]"></span>
    <button className="text-[#6f7590]">BOLL</button>
    <button className="ml-3.5 text-[#1787ff]">EMA</button>
    <span className="w-px h-3.5 ml-[26px] mr-3 bg-[#2f344d]"></span>
    <button className="text-[#1787ff]">MACD</button>
    <Glyph className="w-3.5 h-3.5 ml-[22px] mr-2 text-[#6f7590]" d="M8 2H2v14h14V9M7 11l3-1 6-8" />
    <button className="font-bold">社区指标</button>
    <div className="ml-auto mr-2.5 flex gap-[17px] text-[#1787ff]">
      <button>对数</button>
      <button className="text-[#7b82a0]">%</button>
      <button>自动</button>
    </div>
    <button aria-label="折叠面板" className="absolute z-10 -bottom-1.5 left-1/2 -ml-[22px] w-[41px] h-[9px] rounded-t-xs bg-[#3a4168] flex items-center justify-center">
      <svg viewBox="0 0 8 5" className="w-2 h-[5px]" fill="#8a91b8"><path d="M4 0 8 5H0z" /></svg>
    </button>
  </div>
);

const TabBar: React.FC = () => (
  <div className="flex items-center h-[33px] border-b border-[#0f111f] text-[15px] text-[#b7bdd4] whitespace-nowrap">
    <button className="h-full w-[85px] shrink-0 border-t-2 border-[#1787ff] bg-[#1a2337] text-[#1787ff] pr-1 pt-1">委单区</button>
    <button className="ml-[21px] pt-1.5">自定义指标/回测/实盘</button>
    <button className="ml-[42px] pt-1.5">AI 网格</button>
    <button className="ml-[42px] pt-1.5">合约DCA</button>
    <button className="ml-[43px] pt-1.5">组合下单</button>
    <button className="ml-[59px] pt-1.5">AI分析</button>
    <div className="ml-auto mr-2 pt-1.5 flex items-center gap-3 text-[#868dab]">
      <button aria-label="展开"><ChevronUp className="w-4 h-4" strokeWidth={1.4} /></button>
      <button aria-label="全屏"><Glyph d="M1 1h16v16H1zM10 4.500h3.500V8M8 13.500H4.500V10" /></button>
    </div>
  </div>
);

const quotes = [
  { name: 'MtGox 持有BTC数量', change: '−0.02%', price: '36,079.57', up: false },
  { name: 'ETH/USDT 欧易OKX', change: '+2.86%', price: '3,202.90', up: true },
  { name: '纳斯达克指数期货CFD', change: '+0.63%', price: '21,672.125', up: true },
];

const StatusBar: React.FC = () => (
  <footer className="flex items-center h-9 bg-[#171a2b] text-sm text-[#b7bdd4] whitespace-nowrap overflow-hidden">
    <span className="ml-[3px] w-[55px] shrink-0">资产(₮)</span>
    <button className="w-[133px] h-[27px] shrink-0 bg-[#182742] text-[#1787ff]">实时资产风控</button>
    <button aria-label="编辑" className="ml-[34px] mr-6 text-[#868dab]">
      <svg viewBox="0 0 16 16" className="w-[15px] h-[15px]" fill="currentColor"><path d="M2 14v-3.500L10.500 2l3 3L6 13v1zM8 12.500h7V14H7z" /></svg>
    </button>
    <div className="flex gap-[37px] pt-0.5">
      {quotes.map((q) => (
        <a key={q.name} href="#" className="flex gap-[11px]">
          <span>{q.name}</span>
          <span className={q.up ? 'text-[#2aa37c]' : 'text-[#d63a40]'}>{q.change}</span>
          <span>{q.price}</span>
        </a>
      ))}
    </div>
    <div className="ml-auto w-[247px] shrink-0 flex items-center">
      <button aria-label="帮助" className="mr-3 w-4 h-[18px] rounded-xs bg-[#868dab] text-[#171a2b] text-[13px] leading-4 font-bold border-b-2 border-[#a9afc8]">?</button>
      <Wifi className="w-[22px] h-[22px] mr-2.5 text-[#a9afc8] shrink-0" strokeWidth={1.5} />
      <span>线路 1 : <span className="text-[#2aa37c]">优</span></span>
      <span className="ml-7">SGT&nbsp; 01/30 12:</span>
    </div>
  </footer>
);

const App: React.FC = () => {
  return (
    <div className="min-h-screen overflow-hidden bg-[#171a2b] font-[Roboto,'Noto_Sans_CJK_SC',sans-serif]">
      <div className="flex">
        <main className="flex-1 min-w-0">
          <TickerBar />
          <PeriodBar />
          <DrawBar />
          <Chart />
          <IndicatorBar />
          <div className="h-1.5 bg-[#0c0f1b]"></div>
          <TabBar />
        </main>
        <aside className="relative w-1.5 shrink-0 bg-[#0c0f1b]">
          <button aria-label="展开侧栏" className="absolute top-[373px] right-0 w-[9px] h-10 rounded-l-xs bg-[#3a4168] flex items-center justify-center">
            <svg viewBox="0 0 5 8" className="w-[5px] h-2" fill="#8a91b8"><path d="M0 4 5 0v8z" /></svg>
          </button>
        </aside>
      </div>
      <StatusBar />
    </div>
  );
};

export default App;
